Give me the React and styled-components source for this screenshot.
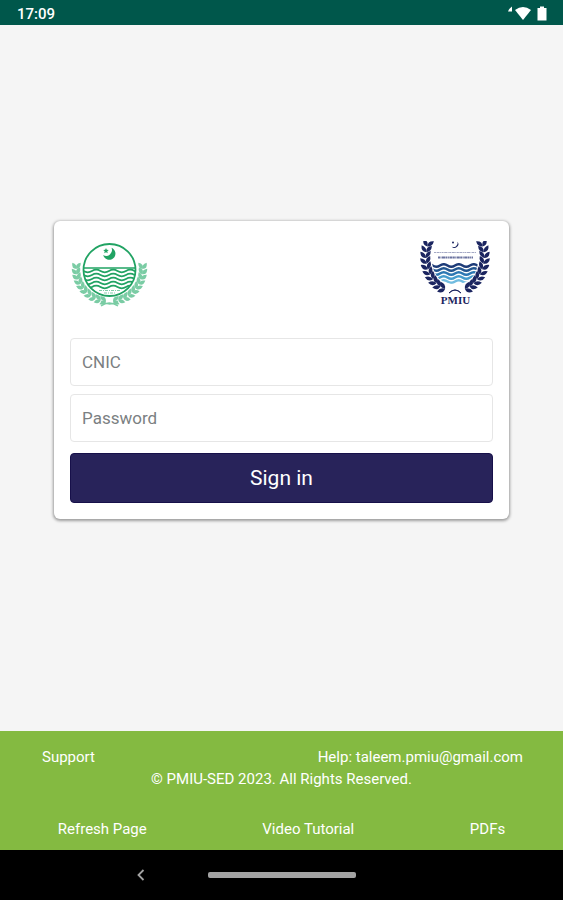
import React, { useState } from 'react';
import styled, { createGlobalStyle } from 'styled-components';

const GlobalStyle = createGlobalStyle`
  * {
    box-sizing: border-box;
  }

  body {
    margin: 0;
    background-color: #f5f5f5;
    font-family: Roboto, 'Liberation Sans', sans-serif;
  }
`;

const Page = styled.div`
  display: flex;
  flex-direction: column;
  min-height: 100vh;
`;

const StatusBar = styled.header`
  display: flex;
  align-items: center;
  justify-content: space-between;
  height: 25px;
  padding: 2px 16px 0 17px;
  background-color: #00574b;
  color: #fff;
  font-size: 15px;
  line-height: 20px;
  font-weight: 500;
`;

const Main = styled.main`
  flex: 1;
  display: flex;
  align-items: center;
  justify-content: center;
  padding: 16px 54px 32px;
`;

const LoginCard = styled.form`
  display: flex;
  flex-direction: column;
  gap: 8px;
  width: 100%;
  max-width: 560px;
  padding: 17px 16px 16px;
  border-radius: 6px;
  background-color: #fff;
  box-shadow: 0 1px 3px 1px rgba(0, 0, 0, 0.36);
`;

const Logos = styled.div`
  display: flex;
  justify-content: space-between;
  height: 92px;
  padding: 3px 3px 0 1px;
`;

const Field = styled.input`
  width: 100%;
  height: 48px;
  padding: 0 11px;
  border: 1px solid #e6e6e6;
  border-radius: 4px;
  background-color: #fff;
  color: #333;
  font-family: inherit;
  font-size: 17px;

  &::placeholder {
    color: #7b7f82;
    opacity: 1;
  }

  &:focus {
    outline: none;
    border-color: #28235a;
  }
`;

const SignInButton = styled.button`
  height: 50px;
  margin-top: 3px;
  border: 1px solid #17104a;
  border-radius: 4px;
  background-color: #28235a;
  color: #fff;
  font-family: inherit;
  font-size: 21px;
  cursor: pointer;
`;

const Footer = styled.footer`
  padding: 15px 0 10px;
  background-color: #84ba41;
  color: #fff;
  font-size: 15px;
  line-height: 22px;
`;

const ContactRow = styled.div`
  display: flex;
  justify-content: space-between;
  padding: 0 40px 0 42px;
`;

const Copyright = styled.p`
  margin: 0 0 28px;
  text-align: center;
`;

const LinkRow = styled.nav`
  display: flex;
  justify-content: space-around;
`;

const FooterLink = styled.a`
  color: inherit;
  text-decoration: none;
`;

const NavigationBar = styled.div`
  display: grid;
  grid-template-columns: 1fr auto 1fr;
  align-items: center;
  height: 50px;
  background-color: #000;
`;

const BackButton = styled.button`
  justify-self: center;
  display: flex;
  margin-left: 74px;
  padding: 0;
  border: none;
  background: none;
  cursor: pointer;
`;

const HomePill = styled.div`
  width: 148px;
  height: 6px;
  border-radius: 2px;
  background-color: #a3a3a3;
`;

// Leaves in pairs along an elliptical stem, tips pointing up the branch
const branchLeaves = ({ cx, cy, rx, ry, from, to, count }) =>
  Array.from({ length: count }, (_, i) => {
    const t = ((from + ((to - from) * i) / (count - 1)) * Math.PI) / 180;
    const angle = (Math.atan2(-ry * Math.cos(t), -rx * Math.sin(t)) * 180) / Math.PI;
    return { x: cx - rx * Math.cos(t), y: cy + ry * Math.sin(t), angle };
  });

function Branch({ shape, leaf, spread }) {
  return branchLeaves(shape).map(({ x, y, angle }, i) => (
    <g key={i} transform={`translate(${x} ${y})`}>
      <path d={leaf} transform={`rotate(${angle + spread})`} />
      <path d={leaf} transform={`rotate(${angle - spread})`} />
    </g>
  ));
}

const wave = (x, y, step, humps) =>
  `M${x} ${y}` + Array.from({ length: humps }, () => `q${step / 4} -2.6 ${step / 2} 0t${step / 2} 0`).join('');

const punjabBranch = { cx: 38.5, cy: 28, rx: 33, ry: 32, from: 0, to: 84, count: 10 };
const pmiuBranch = { cx: 35, cy: 16, rx: 29, ry: 34, from: -18, to: 70, count: 10 };

function PunjabLogo() {
  return (
    <svg width="77" height="68" viewBox="0 0 77 68" role="img" aria-label="Government of the Punjab">
      <defs>
        <clipPath id="seal">
          <circle cx="38.5" cy="29" r="26" />
        </clipPath>
      </defs>
      {[undefined, 'translate(77 0) scale(-1 1)'].map((side, i) => (
        <g key={i} transform={side} fill="#7accA4">
          <Branch shape={punjabBranch} leaf="M0 0Q3 -4.4 7.5 0Q3 3.4 0 0Z" spread={34} />
        </g>
      ))}
      <path d="M30 65Q38 59 47 65M30 60Q39 66 47 60" stroke="#7acca4" strokeWidth="1.4" fill="none" />
      <circle cx="38.5" cy="29" r="26" fill="#fff" stroke="#21a363" strokeWidth="1.8" />
      <path d="M40.5 6.8A6.2 6.2 0 1 1 32.2 14A5.8 5.8 0 0 0 40.5 6.8Z" fill="#21a363" />
      <path d="M35 7l.8 1.8 2 .2-1.5 1.3.4 2-1.7-1-1.8 1 .5-2-1.5-1.3 2-.2z" fill="#21a363" />
      <g clipPath="url(#seal)" fill="none" stroke="#21a363" strokeWidth="1.7">
        {[30, 34, 38, 42, 46].map((y) => (
          <path key={y} d={wave(4, y, 17, 5)} />
        ))}
        <path d="M12 27H65" strokeWidth="1.4" />
      </g>
      <path d="M28 49.5H49M33 52H45" stroke="#84ceaa" strokeWidth="1.2" strokeDasharray="3 1 1 1" />
    </svg>
  );
}

function PmiuLogo() {
  return (
    <svg width="70" height="68" viewBox="0 0 70 68" role="img" aria-label="PMIU">
      <defs>
        <clipPath id="bowl">
          <path d="M12 22H58Q55 43 35 43Q15 43 12 22Z" />
        </clipPath>
      </defs>
      {[undefined, 'translate(70 0) scale(-1 1)'].map((side, i) => (
        <g key={i} transform={side} fill="#1b2560">
          <Branch shape={pmiuBranch} leaf="M0 0Q3.6 -4.6 8.4 -0.4Q4 3.2 0 0Z" spread={38} />
          <path d="M29 52Q35 46 41 52" fill="none" stroke="#1b2560" strokeWidth="1" />
        </g>
      ))}
      <path d="M37.5 0.8A3.7 3.7 0 1 1 31.6 5.4A4 4 0 0 0 37.5 0.8Z" fill="#1b2560" />
      <circle cx="33" cy="1.4" r="1" fill="#1b2560" />
      <path d="M14 11.500H56" stroke="#a3a8c4" strokeWidth="1.2" strokeDasharray="2 .6 3 .5 1 .5" />
      <path d="M18 16.500H53" stroke="#6b739f" strokeWidth="1.8" strokeDasharray="2 .5 1 .5 3 .4" />
      <g clipPath="url(#bowl)" fill="none" strokeWidth="2.4">
        {['#1d3b78', '#235690', '#2c77b3', '#469ccd', '#71bce0'].map((color, i) => (
          <path key={color} d={wave(5, 24.5 + i * 4, 15, 4)} stroke={color} />
        ))}
      </g>
      <text
        x="35.5"
        y="63"
        textAnchor="middle"
        fill="#1b2560"
        fontFamily="'Liberation Serif', serif"
        fontSize="11"
        fontWeight="700"
      >
        PMIU
      </text>
    </svg>
  );
}

function StatusIcons() {
  return (
    <svg width="40" height="16" viewBox="0 0 40 16" fill="#fff" aria-hidden="true">
      <path d="M5 0.5V5.500H1Q2 2.500 5 0.5Z" />
      <path d="M8 4Q16 -2 24 4L16 14Z" />
      <path d="M30.5 2H33V0.5H37V2H39.5V14.5H30.5Z" />
    </svg>
  );
}

function App() {
  const [cnic, setCnic] = useState('');
  const [password, setPassword] = useState('');

  const handleSubmit = (e) => {
    e.preventDefault();
  };

  return (
    <Page>
      <GlobalStyle />
      <StatusBar>
        <span>17:09</span>
        <StatusIcons />
      </StatusBar>

      <Main>
        <LoginCard onSubmit={handleSubmit}>
          <Logos>
            <PunjabLogo />
            <PmiuLogo />
          </Logos>
          <Field
            type="text"
            aria-label="CNIC"
            placeholder="CNIC"
            value={cnic}
            onChange={(e) => setCnic(e.target.value)}
          />
          <Field
            type="password"
            aria-label="Password"
            placeholder="Password"
            value={password}
            onChange={(e) => setPassword(e.target.value)}
          />
          <SignInButton type="submit">Sign in</SignInButton>
        </LoginCard>
      </Main>

      <Footer>
        <ContactRow>
          <FooterLink href="#support">Support</FooterLink>
          <FooterLink href="mailto:taleem.pmiu@gmail.com">Help: taleem.pmiu@gmail.com</FooterLink>
        </ContactRow>
        <Copyright>© PMIU-SED 2023. All Rights Reserved.</Copyright>
        <LinkRow>
          <FooterLink href="#refresh">Refresh Page</FooterLink>
          <FooterLink href="#tutorial">Video Tutorial</FooterLink>
          <FooterLink href="#pdfs">PDFs</FooterLink>
        </LinkRow>
      </Footer>

      <NavigationBar>
        <BackButton type="button" aria-label="Back">
          <svg width="8" height="12" viewBox="0 0 8 12" fill="none" stroke="#a3a3a3" strokeWidth="1.8">
            <path d="M6.5 1L1.5 6L6.5 11" />
          </svg>
        </BackButton>
        <HomePill />
      </NavigationBar>
    </Page>
  );
}

export default App;
